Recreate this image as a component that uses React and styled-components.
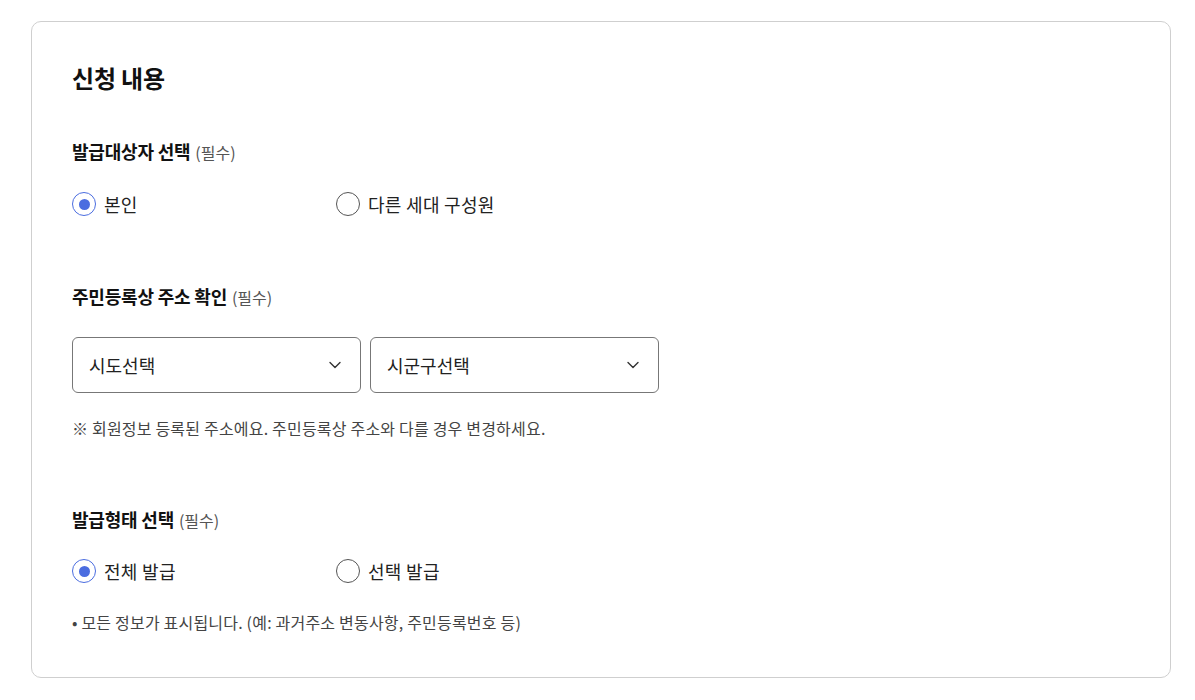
import React, { useState } from 'react'
import styled, { createGlobalStyle } from 'styled-components'

const GlobalStyle = createGlobalStyle`
  html, body {
    margin: 0;
    padding: 0;
    background: #fff;
  }
  body {
    font-family: "Noto Sans CJK KR", "Noto Sans", sans-serif;
    color: #111;
  }
`

const Page = styled.div`
  padding: 21px 24px 22px 31px;
`

const Card = styled.div`
  border: 1px solid #cfcfcf;
  border-radius: 10px;
  padding: 41px 40px 44px 40px;
`

const Title = styled.h2`
  margin: 0;
  font-size: 24px;
  line-height: 30px;
  font-weight: 700;
  color: #111;
  letter-spacing: -0.2px;
`

const Section = styled.section`
  margin-top: ${p => p.$gap || 68}px;
`

const Label = styled.h3`
  margin: 0;
  font-size: 18px;
  line-height: 24px;
  font-weight: 700;
  color: #111;
  letter-spacing: -0.2px;

  span {
    font-size: 16px;
    font-weight: 400;
    color: #555;
    margin-left: 1px;
    letter-spacing: 0;
  }
`

const RadioRow = styled.div`
  display: flex;
  margin-top: ${p => p.$top || 28}px;
`

const RadioItem = styled.label`
  display: flex;
  align-items: center;
  gap: 8px;
  width: 264px;
  height: 24px;
  font-size: 18px;
  letter-spacing: 0.3px;
  color: #222;
  cursor: pointer;
`

const Circle = styled.span`
  box-sizing: border-box;
  width: 24px;
  height: 24px;
  border-radius: 50%;
  border: 1px solid ${p => (p.$on ? '#4b6de0' : '#555')};
  display: flex;
  align-items: center;
  justify-content: center;

  &::after {
    content: '';
    width: 11px;
    height: 11px;
    border-radius: 50%;
    background: #4b6de0;
    display: ${p => (p.$on ? 'block' : 'none')};
  }
`

const SelectRow = styled.div`
  display: flex;
  gap: 9px;
  margin-top: 28px;
`

const SelectBox = styled.div`
  box-sizing: border-box;
  width: 289px;
  height: 56px;
  border: 1px solid #777;
  border-radius: 6px;
  padding: 0 18px 0 16px;
  display: flex;
  align-items: center;
  justify-content: space-between;
  font-size: 18px;
  color: #222;
`

const Note = styled.p`
  margin: ${p => p.$top || 24}px 0 0;
  font-size: 16px;
  line-height: 22px;
  letter-spacing: 0.2px;
  color: #444;
`

const Chevron = () => (
  <svg width="14" height="14" viewBox="0 0 14 14" fill="none">
    <path d="M2 4.5 L7 9.5 L12 4.5" stroke="#333" strokeWidth="1.4" strokeLinecap="round" strokeLinejoin="round" />
  </svg>
)

const Radio = ({ on, children, onClick }) => (
  <RadioItem onClick={onClick}>
    <Circle $on={on} />
    {children}
  </RadioItem>
)

export default function App() {
  const [target, setTarget] = useState('self')
  const [kind, setKind] = useState('all')

  return (
    <Page>
      <GlobalStyle />
      <Card>
        <Title>신청 내용</Title>

        <Section $gap={46}>
          <Label>발급대상자 선택 <span>(필수)</span></Label>
          <RadioRow>
            <Radio on={target === 'self'} onClick={() => setTarget('self')}>본인</Radio>
            <Radio on={target === 'other'} onClick={() => setTarget('other')}>다른 세대 구성원</Radio>
          </RadioRow>
        </Section>

        <Section $gap={68}>
          <Label>주민등록상 주소 확인 <span>(필수)</span></Label>
          <SelectRow>
            <SelectBox>시도선택<Chevron /></SelectBox>
            <SelectBox>시군구선택<Chevron /></SelectBox>
          </SelectRow>
          <Note>※ 회원정보 등록된 주소에요. 주민등록상 주소와 다를 경우 변경하세요.</Note>
        </Section>

        <Section $gap={68}>
          <Label>발급형태 선택 <span>(필수)</span></Label>
          <RadioRow $top={27}>
            <Radio on={kind === 'all'} onClick={() => setKind('all')}>전체 발급</Radio>
            <Radio on={kind === 'part'} onClick={() => setKind('part')}>선택 발급</Radio>
          </RadioRow>
          <Note $top={28}>• 모든 정보가 표시됩니다. (예: 과거주소 변동사항, 주민등록번호 등)</Note>
        </Section>
      </Card>
    </Page>
  )
}
